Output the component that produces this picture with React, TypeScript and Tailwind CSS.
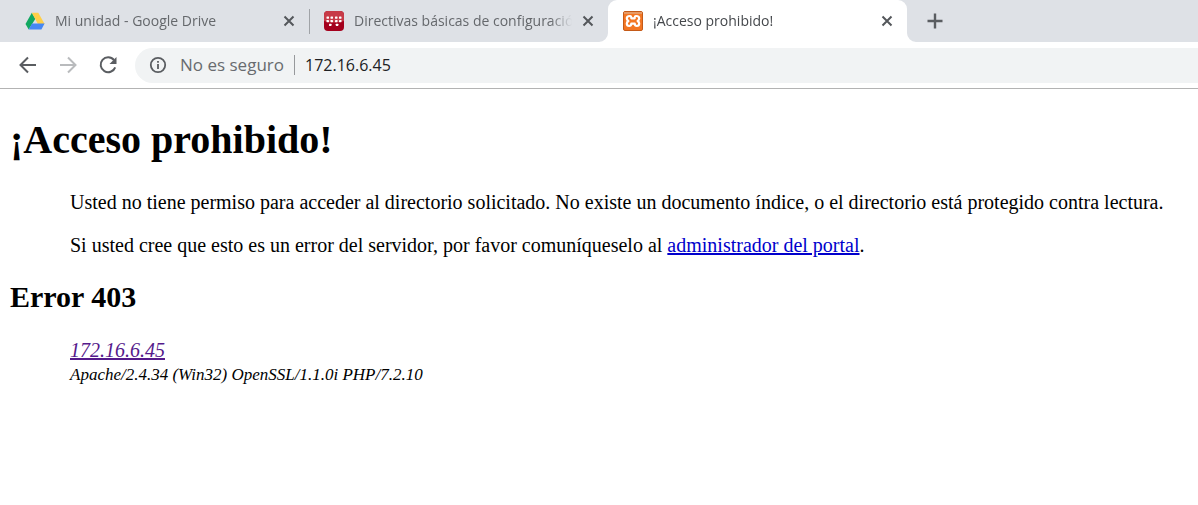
import { useState, type ReactNode } from "react";

function DriveIcon() {
  return (
    <svg viewBox="0 0 20 20" className="size-5 shrink-0" aria-hidden="true">
      <path d="M6.8 1.800 .5 12.900 3.700 18.400 10.400 7.800z" fill="#11a861" />
      <path d="M6.800 1.800H13.300L19.600 12.900H12.900z" fill="#ffcf48" />
      <path d="M7 12.600H19.600L16.400 18.400H3.700z" fill="#4688f4" />
    </svg>
  );
}

function DirectivesIcon() {
  const dots = [
    [2.5, 5.5], [6.5, 5.5], [11, 5.5], [15, 5.5],
    [2.5, 9], [6.5, 9], [11, 9], [15, 9],
    [5, 12.8], [11.8, 12.8],
  ];
  return (
    <svg viewBox="0 0 20 20" className="size-5 shrink-0" aria-hidden="true">
      <rect width="20" height="20" rx="4" fill="#a4001d" />
      <path d="M0 10V4a4 4 0 0 1 4-4h12a4 4 0 0 1 4 4v6q-10 3-20 0z" fill="#c73b48" />
      {dots.map(([x, y]) => (
        <rect key={`${x}-${y}`} x={x} y={y} width="2.5" height="2.2" rx=".4" fill="#fff" />
      ))}
    </svg>
  );
}

function XamppIcon() {
  return (
    <svg viewBox="0 0 20 20" className="size-5 shrink-0" aria-hidden="true">
      <rect x=".5" y=".5" width="19" height="19" rx="1.5" fill="#f37623" stroke="#c45a18" />
      <path d="M1 1H19V3H1z" fill="#e79a64" />
      <path
        d="M7 5C4.300 5 3.800 6.300 3.800 7.400S4.600 9.300 5.400 10C4.400 10.700 3.800 11.500 3.800 12.600S4.600 15 6.200 15 8.200 14 8.300 12.700H11.700C11.800 14 12.200 15 13.800 15S16.200 13.700 16.200 12.600 15.600 10.700 14.600 10C15.400 9.300 16.200 8.500 16.200 7.400S15.700 5 13 5C11.800 5 11.700 6.300 11.700 7.300H8.300C8.300 6.300 8.200 5 7 5Z"
        fill="none"
        stroke="#fff"
        strokeWidth="2.2"
        strokeLinejoin="round"
      />
    </svg>
  );
}

function CloseIcon() {
  return (
    <svg viewBox="0 0 12 12" className="size-3" aria-hidden="true">
      <path d="M1.500 1.500 10.500 10.500M10.500 1.500 1.500 10.500" stroke="#54575b" strokeWidth="2" />
    </svg>
  );
}

type TabProps = { title: string; icon: ReactNode; active?: boolean; separator?: boolean };

function Tab({ title, icon, active, separator }: TabProps) {
  return (
    <div
      className={
        active
          ? "relative flex h-full w-[299px] min-w-0 items-center rounded-t-[9px] bg-white pr-3 pl-[15px] text-[#45484c]"
          : "relative flex h-full w-[299px] min-w-0 items-center pr-3 pl-[15px] text-[#65686c]"
      }
    >
      {active && (
        <>
          <svg viewBox="0 0 9 9" className="absolute bottom-0 -left-[9px] size-[9px]" aria-hidden="true">
            <path d="M9 0V9H0A9 9 0 0 0 9 0z" fill="#fff" />
          </svg>
          <svg viewBox="0 0 9 9" className="absolute -right-[9px] bottom-0 size-[9px]" aria-hidden="true">
            <path d="M0 0V9H9A9 9 0 0 1 0 0z" fill="#fff" />
          </svg>
        </>
      )}
      <button type="button" role="tab" aria-selected={!!active} className="flex min-w-0 flex-1 items-center gap-[10px]">
        {icon}
        <span className="min-w-0 flex-1 overflow-hidden mask-r-from-90% text-left text-[14px] leading-5 whitespace-nowrap">
          {title}
        </span>
      </button>
      <button type="button" aria-label={`Cerrar ${title}`} className="ml-2 flex size-4 shrink-0 items-center justify-center">
        <CloseIcon />
      </button>
      {separator && <span className="absolute top-[9px] right-[-1px] h-[25px] w-px bg-[#a0a3a7]" />}
    </div>
  );
}

function Toolbar() {
  const [address, setAddress] = useState("172.16.6.45");
  return (
    <div className="flex h-[47px] items-center border-b border-[#b3b3b3] pl-[18px]">
      <div className="flex items-center gap-5">
        <button type="button" aria-label="Atrás">
          <svg viewBox="0 0 20 20" className="size-5" fill="none" stroke="#5a5d61" strokeWidth="2" aria-hidden="true">
            <path d="M18 10H3M10 2.500 2.500 10 10 17.500" />
          </svg>
        </button>
        <button type="button" aria-label="Adelante">
          <svg viewBox="0 0 20 20" className="size-5" fill="none" stroke="#b9bbbd" strokeWidth="2" aria-hidden="true">
            <path d="M2 10H17M10 2.500 17.500 10 10 17.500" />
          </svg>
        </button>
        <button type="button" aria-label="Recargar">
          <svg viewBox="0 0 20 20" className="size-5" aria-hidden="true">
            <path d="M16 5A7.500 7.500 0 1 0 17.200 12.300" fill="none" stroke="#5a5d61" strokeWidth="2" />
            <path d="M18.500 2V9H11.500z" fill="#5a5d61" />
          </svg>
        </button>
      </div>
      <div className="ml-[17px] flex h-[35px] min-w-0 flex-1 items-center rounded-l-full bg-[#f1f3f4] pl-[14px]">
        <svg viewBox="0 0 18 18" className="size-[18px] shrink-0" aria-hidden="true">
          <circle cx="9" cy="9" r="7.200" fill="none" stroke="#5a5d61" strokeWidth="1.800" />
          <path d="M8.100 8H9.900V13H8.100zM8.100 5H9.900V6.700H8.100z" fill="#5a5d61" />
        </svg>
        <label htmlFor="address" className="ml-[13px] shrink-0 text-[17px] leading-6 text-[#686b6f]">
          No es seguro
        </label>
        <span className="ml-[10px] h-5 w-px shrink-0 bg-[#97999c]" />
        <input
          id="address"
          type="text"
          value={address}
          onChange={(e) => setAddress(e.target.value)}
          className="ml-[10px] min-w-0 flex-1 bg-transparent text-[16px] leading-6 text-[#202124] outline-none"
        />
      </div>
    </div>
  );
}

export default function App() {
  return (
    <div className="min-h-screen bg-white">
      <header className="font-['Open_Sans',sans-serif]">
        <div className="flex h-[42px] items-center bg-[#dee1e6] pl-[10px]">
          <div role="tablist" className="flex h-full min-w-0">
            <Tab title="Mi unidad - Google Drive" icon={<DriveIcon />} separator />
            <Tab title="Directivas básicas de configuració" icon={<DirectivesIcon />} />
            <Tab title="¡Acceso prohibido!" icon={<XamppIcon />} active />
          </div>
          <button type="button" aria-label="Nueva pestaña" className="ml-5 shrink-0">
            <svg viewBox="0 0 16 16" className="size-4" aria-hidden="true">
              <path d="M8 .5V15.500M.5 8H15.500" stroke="#5a5d61" strokeWidth="2.400" />
            </svg>
          </button>
        </div>
        <Toolbar />
      </header>
      <main className="px-[10px] pt-7 font-['Liberation_Serif',serif] text-[20px] leading-[23px] text-black">
        <h1 className="text-[40px] leading-[46px] font-bold">¡Acceso prohibido!</h1>
        <div className="mt-7 pl-[60px]">
          <p>
            Usted no tiene permiso para acceder al directorio solicitado. No existe un documento índice, o el directorio
            está protegido contra lectura.
          </p>
          <p className="mt-5">
            Si usted cree que esto es un error del servidor, por favor comuníqueselo al{" "}
            <a href="mailto:postmaster@localhost" className="text-[#0000cc] underline">
              administrador del portal
            </a>
            .
          </p>
        </div>
        <h2 className="mt-6 text-[30px] leading-8 font-bold">Error 403</h2>
        <address className="mt-[26px] pl-[60px] italic">
          <a href="/" className="text-[#551a8b] underline">
            172.16.6.45
          </a>
          <br />
          <span className="text-[17px]">Apache/2.4.34 (Win32) OpenSSL/1.1.0i PHP/7.2.10</span>
        </address>
      </main>
    </div>
  );
}
